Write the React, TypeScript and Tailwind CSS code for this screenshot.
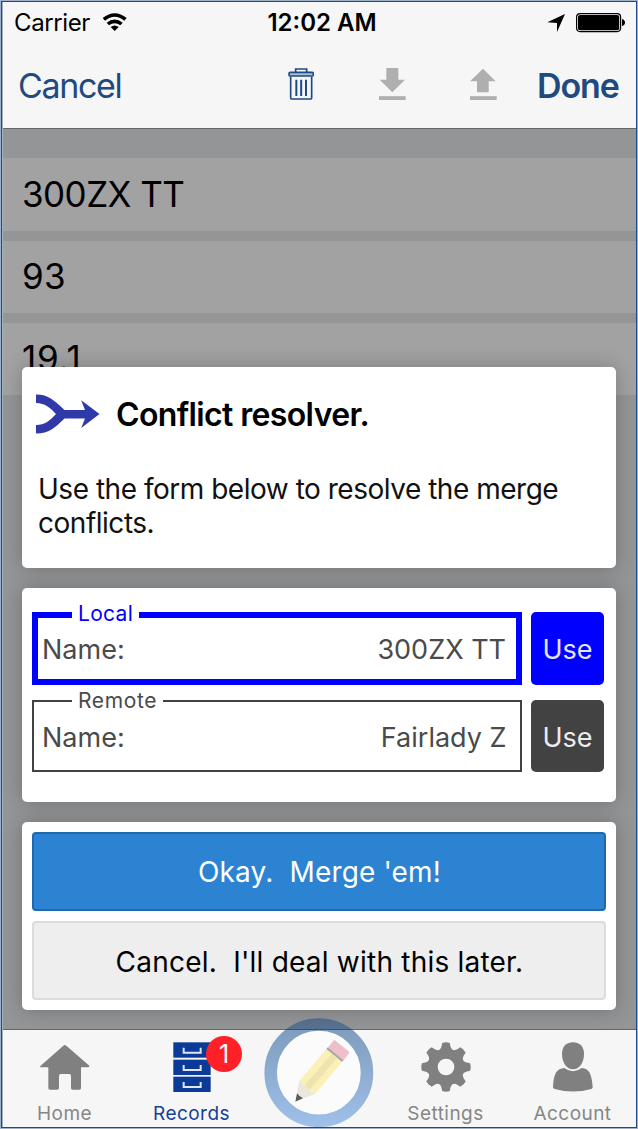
import React from 'react';

function WifiIcon() {
  return (
    <svg className="ml-[12px] h-[18px] w-[25px]" viewBox="303 38 75 54">
      <path d="M305 53Q341 25 377 53L370 61Q341 38 312 61Z" />
      <path d="M317 67Q341 48 365 67L358 75Q341 62 324 75Z" />
      <path d="M329 80Q341 71 353 80L341 92Z" />
    </svg>
  );
}

function LocationIcon() {
  return (
    <svg className="h-[18px] w-[18px]" viewBox="687 41 54 54">
      <path d="M741 41L717 95V68L688 66Z" />
    </svg>
  );
}

function BatteryIcon() {
  return (
    <svg className="ml-[11px] h-[20px] w-[50px]" viewBox="0 0 50 20">
      <rect x="0.6" y="0.6" width="44" height="18" rx="3.5" fill="none" stroke="#000" strokeWidth="1.2" />
      <rect x="2" y="1.9" width="41.2" height="15.4" rx="2" />
      <path d="M46 6Q49 7 49 9.500Q49 12 46 13Z" />
    </svg>
  );
}

function TrashIcon() {
  return (
    <svg className="block h-[32px] w-[26px]" viewBox="864 201 78 96" fill="none" stroke="#1d4a85" strokeWidth="5">
      <path d="M887 214V204H920V214" />
      <rect x="867" y="214" width="73" height="11" rx="4" fill="#a9bdd6" />
      <path d="M872 227V290Q872 294 876 294H931Q935 294 935 290V227" />
      <path d="M889 236V285M903.500 236V285M918 236V285" strokeWidth="6" />
    </svg>
  );
}

function TransferIcon({ up }: { up?: boolean }) {
  return (
    <svg className="block h-[32px] w-[27px]" viewBox="0 0 81 96" fill="#afafaf">
      {up ? <path d="M39 2L77 40H56V73H21V40H0Z" /> : <path d="M22 0H58V35H78L40 73L2 35H22Z" />}
      <rect x="0" y="84.500" width="80" height="12" />
    </svg>
  );
}

function MergeIcon() {
  return (
    <svg className="h-[40px] w-[64px]" viewBox="0 0 64 40" fill="#3039a8">
      <path d="M0 .5C13 .5 18 6.500 28.500 16H49L45.200 6.300L63.500 20L45.200 34L49 24.500H28.500C19 33.500 13 39.500 0 39.500V31C9 31 14 26.500 20 20C14 13.500 9 9.200 0 9Z" />
    </svg>
  );
}

function HomeIcon() {
  return (
    <svg className="h-[50px] w-[50px]" viewBox="119 127 150 150" fill="#808080">
      <path d="M189 138Q193 134 198 138L267 198Q268 203 263 203H242V265Q242 270 237 270H217Q212 270 212 265V229Q212 223 207 223H181Q176 223 176 229V265Q176 270 171 270H149Q144 270 144 265V203H122Q117 203 121 198Z" />
    </svg>
  );
}

function RecordsIcon() {
  return (
    <svg className="h-[50px] w-[38px]" viewBox="517 127 114 150">
      {[128, 180, 231].map((y) => (
        <g key={y} transform={`translate(0 ${y})`}>
          <rect x="518" y="0" width="112" height="46" fill="#0b3a98" />
          <path d="M549 16V31H600V16" fill="none" stroke="#dfe6f4" strokeWidth="6" />
        </g>
      ))}
    </svg>
  );
}

function gearPath() {
  const pts: string[] = [];
  for (let i = 0; i < 8; i++) {
    const at = (deg: number, r: number) => {
      const a = ((i * 45 + deg - 90) * Math.PI) / 180;
      return `${(75 + r * Math.cos(a)).toFixed(1)} ${(75 + r * Math.sin(a)).toFixed(1)}`;
    };
    pts.push(`${i ? 'L' : 'M'}${at(-12, 64)}L${at(-9, 73)}Q${at(0, 76.5)} ${at(9, 73)}L${at(12, 64)}Q${at(22.5, 48)} ${at(33, 64)}`);
  }
  return pts.join('') + 'Z';
}

function GearIcon() {
  return (
    <svg className="h-[50px] w-[50px]" viewBox="0 0 150 150">
      <path fillRule="evenodd" fill="#808080" d={gearPath() + 'M75 50A25 25 0 1 0 75 100A25 25 0 1 0 75 50Z'} />
    </svg>
  );
}

function PersonIcon() {
  return (
    <svg className="h-[50px] w-[40px]" viewBox="518 127 120 150" fill="#808080">
      <path d="M578 128C600 128 611 143 611 163C611 189 597 209 578 209C559 209 545 189 545 163C545 143 556 128 578 128Z" />
      <path d="M552 205Q578 225 604 205C626 207 634 221 637 262Q637 266 633 268Q578 283 523 268Q518 266 518 262C520 221 529 207 552 205Z" />
    </svg>
  );
}

function PencilButton() {
  return (
    <svg className="absolute left-[9px] top-[-13px] h-[110px] w-[110px]" viewBox="43 50 330 330">
      <defs>
        <linearGradient id="ring" x1="0" y1="53" x2="0" y2="380" gradientUnits="userSpaceOnUse">
          <stop offset="0" stopColor="#526b88" />
          <stop offset="0.098" stopColor="#577291" />
          <stop offset="0.099" stopColor="#36506f" />
          <stop offset="0.107" stopColor="#36506f" />
          <stop offset="0.108" stopColor="#809dbd" />
          <stop offset="1" stopColor="#9fc0ea" />
        </linearGradient>
      </defs>
      <circle cx="207.500" cy="217" r="144.500" fill="#fbfbfb" stroke="url(#ring)" strokeWidth="37.500" />
      <path d="M254 118L300 156L281 181L234 142Z" fill="#efbfc9" />
      <path d="M234 141L281 180L277 185L230 147Z" fill="#a8a8a2" />
      <path d="M230 147L277 185L195 282L148 243Z" fill="#fbf0b6" />
      <path d="M246 160L262 173L180 269L164 256Z" fill="#f0e4ae" />
      <path d="M148 243L195 282L160 294L142 279Z" fill="#eae7dc" />
      <path d="M142 279L150 287L160 294L137 304Z" fill="#5c5c5c" />
    </svg>
  );
}

function Tab({ label, active, children }: { label: string; active?: boolean; children: React.ReactNode }) {
  return (
    <div className="relative flex w-[127px] shrink-0 flex-col items-center pt-[12px]">
      {children}
      <span className={`mt-[10px] text-[19px] leading-[23px] tracking-[0.45px] ${active ? 'text-[#153f98]' : 'text-[#868686]'}`}>{label}</span>
    </div>
  );
}

function Version({ title, value, local }: { title: string; value: string; local?: boolean }) {
  return (
    <div className={`flex gap-[9px] ${local ? 'h-[73px]' : 'h-[72px]'}`}>
      <div
        className={`relative flex flex-1 items-center justify-between pt-[3px] text-[27px] leading-[34px] text-[#4a4a4a] ${
          local ? 'border-[6px] border-[#0000ff] pl-[4px] pr-[10px]' : 'border-2 border-[#424242] pl-[8px] pr-[13.5px]'
        }`}
      >
        <span
          className={`absolute bg-white px-[6px] text-[21px] leading-[24px] ${
            local ? 'left-[34px] top-[-16px] tracking-[0.3px] text-[#0000ff]' : 'left-[38px] top-[-13px] tracking-[0.65px]'
          }`}
        >
          {title}
        </span>
        <span>Name:</span>
        <span>{value}</span>
      </div>
      <button
        className={`w-[73px] rounded-[5px] pt-[3px] text-[27px] leading-[34px] ${
          local ? 'bg-[#0000ff] text-[#e4e4ff]' : 'bg-[#424242] text-[#ececec]'
        }`}
      >
        Use
      </button>
    </div>
  );
}

const card = 'rounded-[5px] bg-white shadow-[0_0_20px_rgba(0,0,0,0.24)]';

export default function App() {
  return (
    <div className="h-[1129px] w-[638px] bg-[#9fb2cb] p-px font-['Inter',sans-serif] text-black">
      <div className="h-full border border-[#1f4a80] bg-[#f6f6f6]">
        <div className="flex h-full flex-col border-l border-[#a3b4c9]">
          <header className="flex h-[126px] flex-col">
            <div className="grid h-[41px] grid-cols-[1fr_auto_1fr] items-center text-[24px] leading-[30px]">
              <div className="flex items-center pl-[11px]">
                <span className="tracking-[-0.39px]">Carrier</span>
                <span className="-mt-[2px]"><WifiIcon /></span>
              </div>
              <span className="pl-[5px] font-semibold">12:02 AM</span>
              <div className="flex items-center justify-end pr-[10px]">
                <LocationIcon />
                <BatteryIcon />
              </div>
            </div>
            <nav className="flex flex-1 items-center pl-[15px] text-[34px] leading-[40px] text-[#1f4a80]">
              <span className="w-[270px] pt-px tracking-[-1.35px]">Cancel</span>
              <span className="-mt-[4px]"><TrashIcon /></span>
              <span className="-mt-[4px] ml-[65px]"><TransferIcon /></span>
              <span className="-mt-[4px] ml-[64px]"><TransferIcon up /></span>
              <span className="ml-[40px] pt-px font-semibold tracking-[-1.1px]">Done</span>
            </nav>
          </header>

          <main className="relative h-[902px] border-y border-[#66676a] bg-[#949597]">
            <div className="flex flex-col gap-[10px] pt-[29px] text-[35px] leading-[42px] tracking-[-0.55px]">
              <div className="flex h-[73px] items-center bg-[#a2a2a2] pb-[2px] pl-[19px]">300ZX TT</div>
              <div className="flex h-[72px] items-center bg-[#a2a2a2] pb-[2px] pl-[19px] tracking-[0.4px]">93</div>
              <div className="flex h-[72px] items-center bg-[#a2a2a2] pb-[2px] pl-[19px] tracking-[0.8px]">19.1</div>
            </div>

            <div className="absolute inset-0 flex flex-col justify-end gap-[20px] pb-[19px] pl-[19px] pr-[20px]">
              <section className={`h-[201px] pl-[14px] pt-[27px] ${card}`}>
                <div className="flex h-[40px] items-center">
                  <MergeIcon />
                  <h1 className="ml-[16px] pt-[2px] text-[32px] font-semibold leading-[40px] tracking-[-0.63px]">Conflict resolver.</h1>
                </div>
                <p className="ml-[2px] mt-[38px] text-[28px] leading-[34px] tracking-[-0.48px] text-[#111]">
                  Use the form below to resolve the merge
                  <br />
                  conflicts.
                </p>
              </section>

              <section className={`flex h-[214px] flex-col gap-[15px] pl-[10px] pr-[12px] pt-[24px] ${card}`}>
                <Version title="Local" value="300ZX TT" local />
                <Version title="Remote" value="Fairlady Z" />
              </section>

              <section className={`flex flex-col gap-[10px] p-[10px] ${card}`}>
                <button className="h-[79px] whitespace-pre rounded-[4px] border-2 border-[#1e69ad] bg-[#2b83d2] pl-px pt-px text-[28px] tracking-[0.15px] text-white">
                  {"Okay.  Merge 'em!"}
                </button>
                <button className="h-[79px] whitespace-pre rounded-[4px] border-2 border-[#dcdcdc] bg-[#eeeeee] pl-px pt-[2px] text-[28px] tracking-[0.22px]">
                  {"Cancel.  I'll deal with this later."}
                </button>
              </section>
            </div>
          </main>

          <footer className="flex flex-1 justify-center pr-[2px]">
            <Tab label="Home"><HomeIcon /></Tab>
            <Tab label="Records" active>
              <RecordsIcon />
              <span className="absolute left-[78px] top-[6px] flex h-[36px] w-[36px] items-center justify-center rounded-full bg-[#ff2127] text-[25px] leading-none text-white">1</span>
            </Tab>
            <div className="relative w-[127px] shrink-0"><PencilButton /></div>
            <Tab label="Settings"><GearIcon /></Tab>
            <Tab label="Account"><PersonIcon /></Tab>
          </footer>
        </div>
      </div>
    </div>
  );
}
